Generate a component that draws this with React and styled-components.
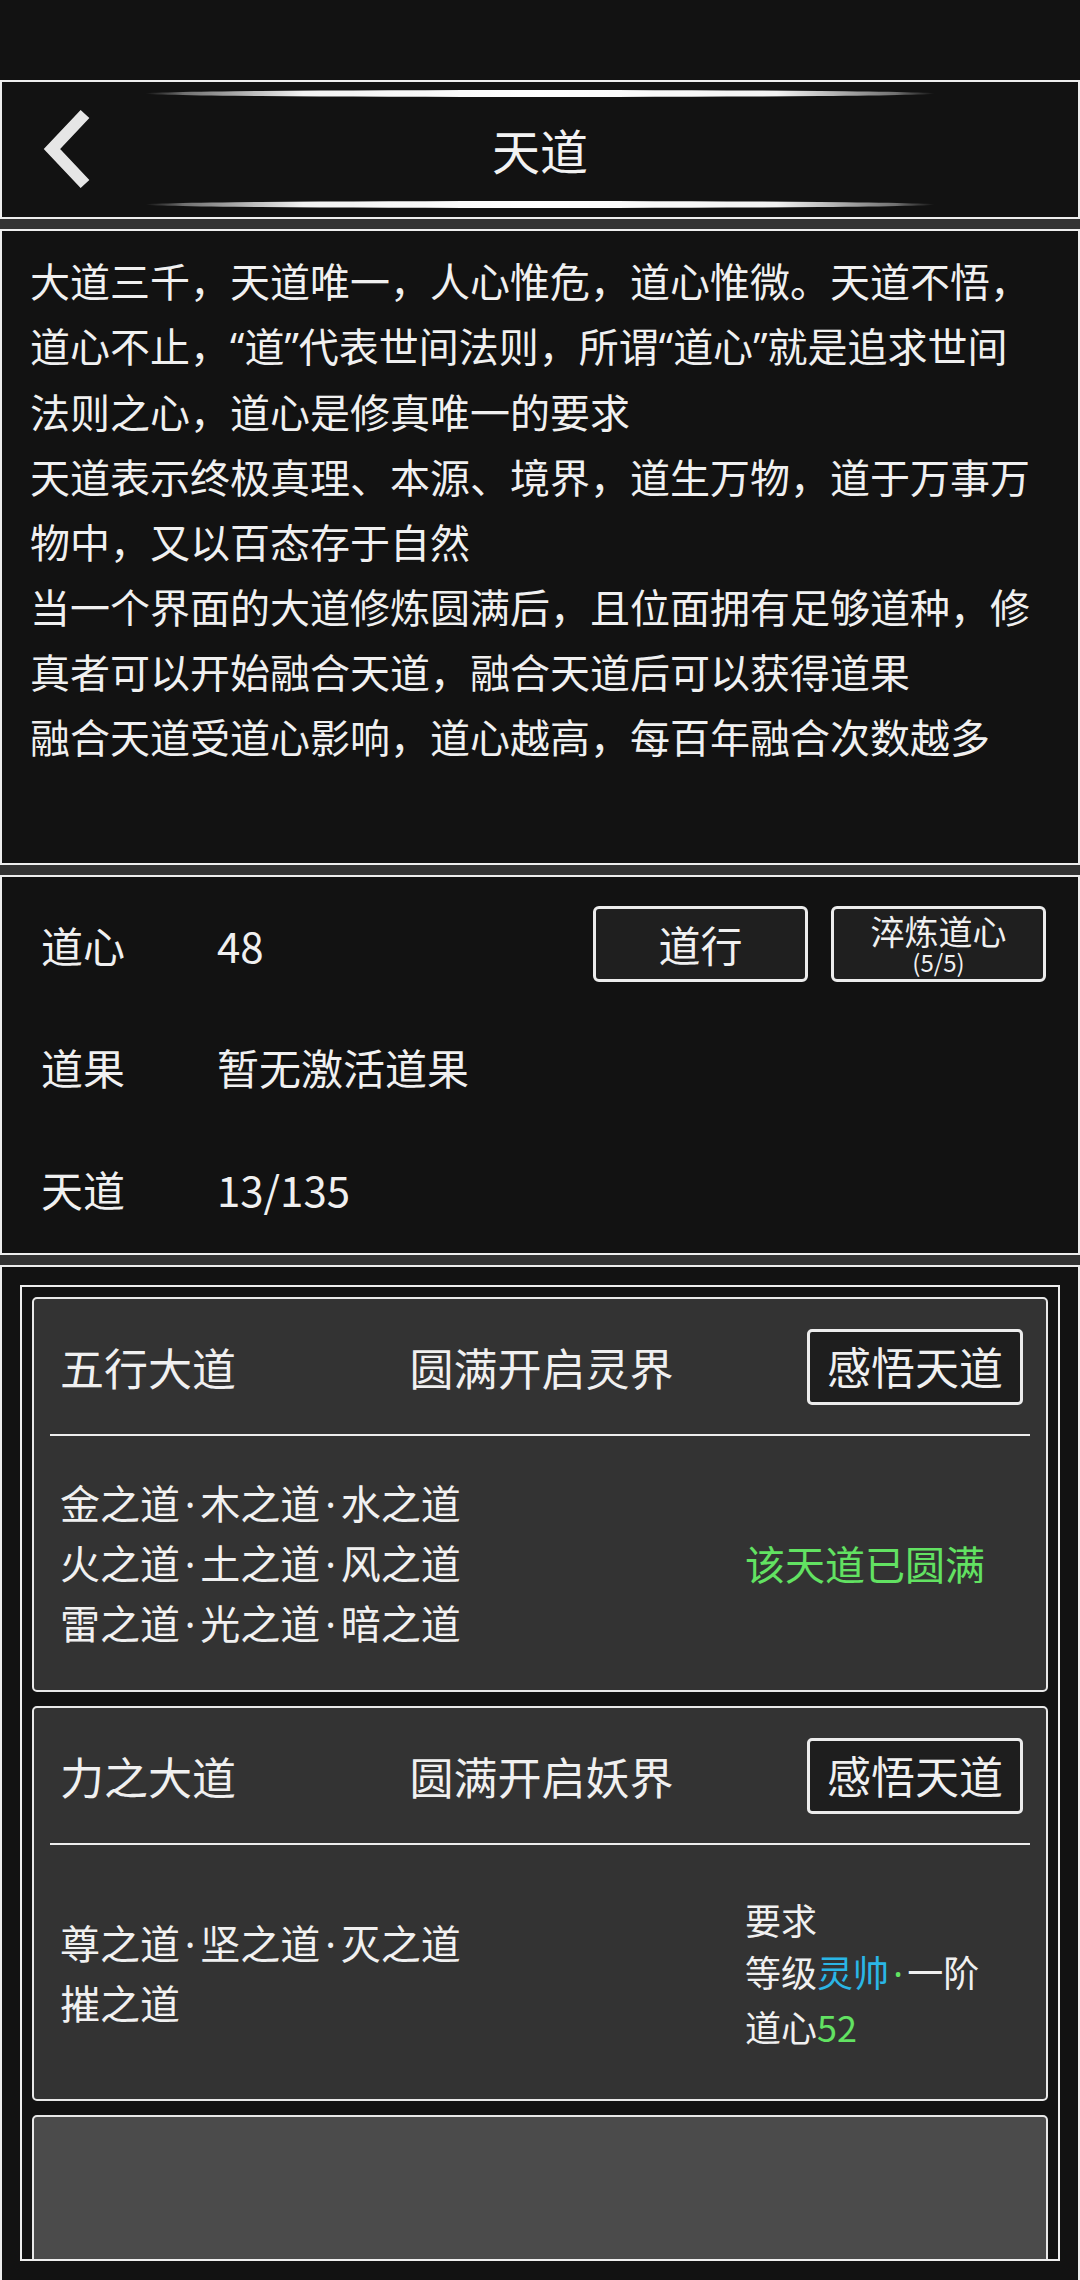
import React from "react";
import styled, { createGlobalStyle } from "styled-components";

const GlobalStyle = createGlobalStyle`
  * { box-sizing: border-box; }
  body {
    margin: 0;
    background: #333333;
    font-family: "Noto Sans CJK SC", "Noto Sans", sans-serif;
    color: #f0f0f0;
  }
  p { margin: 0; }
`;

const Page = styled.div`
  width: 1080px;
  height: 2280px;
  display: flex;
  flex-direction: column;
  overflow: hidden;
`;

const StatusBar = styled.div`
  height: 80px;
  flex-shrink: 0;
  background: #121212;
`;

const Box = styled.section`
  flex-shrink: 0;
  background: #121212;
  border: 2px solid #eeeeee;
  margin-top: ${(p) => (p.$first ? "0" : "10px")};
  height: ${(p) => p.$h}px;
`;

const HeaderBox = styled(Box)`
  display: flex;
  flex-direction: column;
  padding: 8px 0 9px;
`;

const Glow = styled.div`
  align-self: center;
  width: 790px;
  height: 7px;
  border-radius: 50%;
  background: linear-gradient(
    90deg,
    rgba(255, 255, 255, 0) 0%,
    rgba(255, 255, 255, 0.4) 5%,
    rgba(255, 255, 255, 0.95) 20%,
    #ffffff 50%,
    rgba(255, 255, 255, 0.95) 80%,
    rgba(255, 255, 255, 0.4) 95%,
    rgba(255, 255, 255, 0) 100%
  );
`;

const HeaderRow = styled.div`
  flex: 1;
  display: grid;
  grid-template-columns: 1fr auto 1fr;
  align-items: center;
`;

const BackButton = styled.button`
  justify-self: start;
  margin-left: 40px;
  background: none;
  border: none;
  padding: 0;
  width: 60px;
  height: 80px;
  display: flex;
  align-items: center;
`;

const Title = styled.h1`
  margin: 0;
  font-size: 48px;
  font-weight: 400;
  line-height: 1;
  color: #f2f2f2;
`;

const Latin = styled.span`
  font-family: "Noto Sans", sans-serif;
  margin: 0 ${(p) => (p.$dot ? "0.12em" : "0")};
`;

const Intro = styled(Box)`
  padding: 17px 36px 0 28px;
  font-size: 40px;
  line-height: 65px;
  color: #f0f0f0;
`;

const Stats = styled(Box)`
  padding: 6px 32px 0 39px;
`;

const StatRow = styled.div`
  height: 122px;
  display: flex;
  align-items: center;
  font-size: 42px;
`;

const StatLabel = styled.span`
  width: 176px;
`;

const StatValue = styled.span`
  flex: 1;
`;

const Actions = styled.div`
  display: flex;
  gap: 23px;
`;

const OutlineButton = styled.button`
  width: ${(p) => p.$w || 215}px;
  height: 76px;
  border: 3px solid #ececec;
  border-radius: 6px;
  background: #1f1f1f;
  color: #f0f0f0;
  font-family: inherit;
  font-size: ${(p) => p.$size || 42}px;
  line-height: ${(p) => (p.$stack ? "36px" : "1.1")};
  padding: 0;
  display: flex;
  flex-direction: column;
  align-items: center;
  justify-content: center;
`;

const Small = styled.span`
  font-size: 24px;
  line-height: 26px;
`;

const Lower = styled.section`
  flex: 1;
  min-height: 0;
  overflow: hidden;
  margin-top: 10px;
  background: #121212;
  border: 2px solid #eeeeee;
  border-bottom: none;
  padding: 18px 18px 19px;
  display: flex;
`;

const Frame = styled.div`
  flex: 1;
  border: 2px solid #eeeeee;
  padding: 10px 10px 0;
  overflow: hidden;
`;

const Card = styled.div`
  height: 395px;
  margin-bottom: 14px;
  border: 2px solid #e8e8e8;
  border-radius: 5px;
  background: ${(p) => (p.$dim ? "#4b4b4b" : "#333333")};
  display: flex;
  flex-direction: column;
`;

const CardHead = styled.div`
  height: 135px;
  display: grid;
  grid-template-columns: 1fr auto 1fr;
  align-items: center;
  padding: 0 23px 0 26px;
  font-size: 44px;
`;

const HeadButton = styled(OutlineButton)`
  justify-self: end;
  font-size: 44px;
  border-radius: 5px;
  background: #1e1e1e;
`;

const Divider = styled.div`
  height: 2px;
  margin: 0 16px;
  background: #eeeeee;
`;

const CardBody = styled.div`
  flex: 1;
  display: grid;
  grid-template-columns: 685px 1fr;
  align-items: center;
  padding-left: 26px;
`;

const DaoList = styled.div`
  font-size: 40px;
  line-height: 59px;
`;

const Status = styled.div`
  font-size: ${(p) => p.$size || 36}px;
  line-height: 52px;
  color: ${(p) => p.$color || "#f0f0f0"};
`;

const Tint = styled.span`
  color: ${(p) => p.$color};
`;

const GREEN = "#62e262";
const BLUE = "#2ab6e6";

// quotes and middle dots take the narrow latin glyphs, as on the device
function Text({ children }) {
  return children.split(/([“”·])/).map((part, i) =>
    /^[“”·]$/.test(part) ? (
      <Latin key={i} $dot={part === "·"}>
        {part}
      </Latin>
    ) : (
      part
    )
  );
}

const intro = [
  "大道三千，天道唯一，人心惟危，道心惟微。天道不悟，道心不止，“道”代表世间法则，所谓“道心”就是追求世间法则之心，道心是修真唯一的要求",
  "天道表示终极真理、本源、境界，道生万物，道于万事万物中，又以百态存于自然",
  "当一个界面的大道修炼圆满后，且位面拥有足够道种，修真者可以开始融合天道，融合天道后可以获得道果",
  "融合天道受道心影响，道心越高，每百年融合次数越多",
];

function Chevron() {
  return (
    <svg width="52" height="80" viewBox="0 0 52 80">
      <path
        d="M43 5 L10 40 L43 75"
        fill="none"
        stroke="#e6e6e6"
        strokeWidth="12"
        strokeLinejoin="miter"
      />
    </svg>
  );
}

function DaoCard({ name, reward, lines, children }) {
  return (
    <Card>
      <CardHead>
        <span>{name}</span>
        <span>{reward}</span>
        <HeadButton $w={216}>感悟天道</HeadButton>
      </CardHead>
      <Divider />
      <CardBody>
        <DaoList>
          {lines.map((l) => (
            <p key={l}>
              <Text>{l}</Text>
            </p>
          ))}
        </DaoList>
        {children}
      </CardBody>
    </Card>
  );
}

export default function App() {
  return (
    <>
      <GlobalStyle />
      <Page>
        <StatusBar />
        <HeaderBox $first $h={139}>
          <Glow />
          <HeaderRow>
            <BackButton aria-label="返回">
              <Chevron />
            </BackButton>
            <Title>天道</Title>
            <span />
          </HeaderRow>
          <Glow />
        </HeaderBox>

        <Intro $h={636}>
          {intro.map((t) => (
            <p key={t}>
              <Text>{t}</Text>
            </p>
          ))}
        </Intro>

        <Stats $h={380}>
          <StatRow>
            <StatLabel>道心</StatLabel>
            <StatValue>48</StatValue>
            <Actions>
              <OutlineButton>道行</OutlineButton>
              <OutlineButton $size={34} $stack>
                淬炼道心
                <Small>(5/5)</Small>
              </OutlineButton>
            </Actions>
          </StatRow>
          <StatRow>
            <StatLabel>道果</StatLabel>
            <StatValue>暂无激活道果</StatValue>
          </StatRow>
          <StatRow>
            <StatLabel>天道</StatLabel>
            <StatValue>13/135</StatValue>
          </StatRow>
        </Stats>

        <Lower>
          <Frame>
            <DaoCard
              name="五行大道"
              reward="圆满开启灵界"
              lines={["金之道·木之道·水之道", "火之道·土之道·风之道", "雷之道·光之道·暗之道"]}
            >
              <Status $size={40} $color={GREEN}>
                该天道已圆满
              </Status>
            </DaoCard>
            <DaoCard
              name="力之大道"
              reward="圆满开启妖界"
              lines={["尊之道·坚之道·灭之道", "摧之道"]}
            >
              <Status>
                <p>要求</p>
                <p>
                  等级<Tint $color={BLUE}>灵帅</Tint>
                  <Tint $color={GREEN}>
                    <Latin $dot>·</Latin>
                  </Tint>
                  一阶
                </p>
                <p>
                  道心<Tint $color={GREEN}>52</Tint>
                </p>
              </Status>
            </DaoCard>
            <Card $dim />
          </Frame>
        </Lower>
      </Page>
    </>
  );
}
